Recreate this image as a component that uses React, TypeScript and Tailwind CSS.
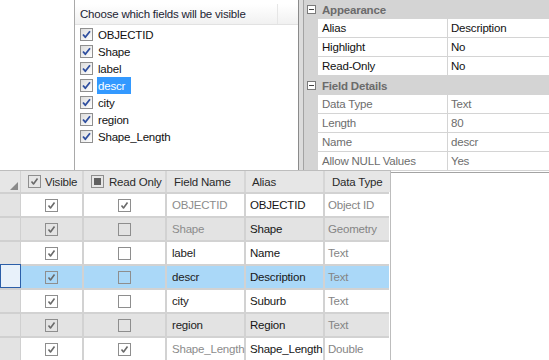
import React from 'react';

type Field = {
  name: string;
  alias: string;
  type: string;
  readOnly: boolean;
  system: boolean;
};

const fields: Field[] = [
  { name: 'OBJECTID', alias: 'OBJECTID', type: 'Object ID', readOnly: true, system: true },
  { name: 'Shape', alias: 'Shape', type: 'Geometry', readOnly: false, system: true },
  { name: 'label', alias: 'Name', type: 'Text', readOnly: false, system: false },
  { name: 'descr', alias: 'Description', type: 'Text', readOnly: false, system: false },
  { name: 'city', alias: 'Suburb', type: 'Text', readOnly: false, system: false },
  { name: 'region', alias: 'Region', type: 'Text', readOnly: false, system: false },
  { name: 'Shape_Length', alias: 'Shape_Length', type: 'Double', readOnly: true, system: true },
];

const selectedIndex = 3;

// grey flat checkbox used by the grid
const GridCheck: React.FC<{ checked: boolean }> = ({ checked }) => (
  <span className="w-[13px] h-[13px] border border-[#8e8e8e] flex items-center justify-center">
    {checked && (
      <svg width="11" height="11" viewBox="0 0 11 11">
        <path d="M2.5 5.5 L4.5 8 L8.5 2.5" fill="none" stroke="#6a6a6a" strokeWidth="1.6" strokeLinejoin="round" />
      </svg>
    )}
  </span>
);

// classic blue-tick checkbox used by the chooser popup
const ListCheck: React.FC = () => (
  <span className="w-[13px] h-[13px] border border-[#8f8f8f] bg-gradient-to-br from-[#dcdcdc] to-white flex items-center justify-center">
    <svg width="11" height="11" viewBox="0 0 11 11">
      <path d="M2 5.5 L4.3 8.2 L9 2.3" fill="none" stroke="#2f4f9f" strokeWidth="1.8" strokeLinejoin="round" />
    </svg>
  </span>
);

const Collapse: React.FC = () => (
  <span className="w-[9px] h-[9px] border border-[#7a7a7a] bg-white flex items-center justify-center">
    <span className="w-[5px] h-px bg-[#444]" />
  </span>
);

const FieldChooser: React.FC = () => (
  <div className="w-[225px] h-full border-l border-r border-l-[#a9a9a9] border-r-[#8a8a8a] bg-white pt-[4px]">
    <div className="h-[21px] flex bg-gradient-to-b from-white to-[#f1f1f1] border-b border-[#e2e2e2]">
      <div className="w-[203px] border-r border-[#e6e6e6] pl-[5px] pt-[2px] flex items-center text-[#1c2433]">
        Choose which fields will be visible
      </div>
    </div>
    <div className="pt-[1px]">
      {fields.map((f, i) => (
        <div key={f.name} className="h-[17px] flex items-center pl-[5px] gap-[4px]">
          <ListCheck />
          <span
            className={
              i === selectedIndex
                ? 'bg-[#3399ff] text-white px-[1px] pt-[2px] h-[17px] flex items-center w-[34px]'
                : 'px-[1px] pt-[2px] text-[#111]'
            }
          >
            {f.name}
          </span>
        </div>
      ))}
    </div>
  </div>
);

const PropRow: React.FC<{ label: string; value: string; muted?: boolean }> = ({ label, value, muted }) => (
  <div className={`h-[19px] flex ${muted ? 'text-[#6d6d6d]' : 'text-[#111]'}`}>
    <div className="w-[14px] bg-[#d4d4d4]" />
    <div className="w-[130px] bg-white border-r border-b border-[#d4d4d4] pl-[4px] pt-[2px] flex items-center">{label}</div>
    <div className="flex-1 bg-white border-b border-[#d4d4d4] pl-[3px] pt-[2px] flex items-center">{value}</div>
  </div>
);

const Category: React.FC<{ title: string }> = ({ title }) => (
  <div className="h-[19px] flex items-center bg-[#d4d4d4] pl-[3px] gap-[6px]">
    <Collapse />
    <span className="font-bold text-[#6b6b6b] pt-[2px]">{title}</span>
  </div>
);

const PropertyGrid: React.FC = () => (
  <div className="flex-1 h-[173px] border-l border-b border-[#a3a3a3] bg-white">
    <Category title="Appearance" />
    <PropRow label="Alias" value="Description" />
    <PropRow label="Highlight" value="No" />
    <PropRow label="Read-Only" value="No" />
    <Category title="Field Details" />
    <PropRow label="Data Type" value="Text" muted />
    <PropRow label="Length" value="80" muted />
    <PropRow label="Name" value="descr" muted />
    <PropRow label="Allow NULL Values" value="Yes" muted />
  </div>
);

const cols = 'grid grid-cols-[21px_63px_83px_79px_79px_64px]';

const FieldGrid: React.FC = () => (
  <div className="relative z-10 w-[391px] border-t border-r border-[#bdbdbd] bg-white">
    <div className={`${cols} h-[21px] bg-[#e6e6e6] text-[#2a2a2a]`}>
      <div className="border-r border-[#d2d2d2] flex items-end justify-end pr-[2px] pb-[2px]">
        <svg width="8" height="8" viewBox="0 0 8 8">
          <polygon points="8,0 8,8 0,8" fill="#8a8a8a" />
        </svg>
      </div>
      <div className="border-r-2 border-[#d6d6d6] flex items-center pl-[7px] gap-[4px]">
        <GridCheck checked />
        <span className="pt-[2px]">Visible</span>
      </div>
      <div className="border-r-2 border-[#d6d6d6] flex items-center pl-[7px] gap-[5px]">
        <span className="w-[13px] h-[13px] border border-[#8e8e8e] flex items-center justify-center">
          <span className="w-[7px] h-[7px] bg-[#606060]" />
        </span>
        <span className="pt-[2px]">Read Only</span>
      </div>
      <div className="border-r-2 border-[#d6d6d6] flex items-center pl-[7px] pt-[2px]">Field Name</div>
      <div className="border-r-2 border-[#d6d6d6] flex items-center pl-[6px] pt-[2px]">Alias</div>
      <div className="flex items-center pl-[7px] pt-[2px]">Data Type</div>
    </div>
    {fields.map((f, i) => {
      const selected = i === selectedIndex;
      const rowBg = selected ? 'bg-[#aad8f8]' : i % 2 === 1 ? 'bg-[#e3e3e3]' : 'bg-white';
      return (
        <div key={f.name} className={`${cols} h-[24px]`}>
          <div
            className={
              selected
                ? 'border border-[#2b5ea8] bg-[#e8f1fa]'
                : 'bg-[#e3e3e3] border-r border-t-2 border-[#d0d0d0]'
            }
          />
          <div className={`${rowBg} border-r-2 border-t-2 border-[#d2d2d2] flex items-center justify-center`}>
            <GridCheck checked />
          </div>
          <div className={`${rowBg} border-r-2 border-t-2 border-[#d2d2d2] flex items-center justify-center`}>
            <GridCheck checked={f.readOnly} />
          </div>
          <div
            className={`${rowBg} border-r-2 border-t-2 border-[#d2d2d2] flex items-center pl-[5px] pt-[2px] whitespace-nowrap ${
              f.system ? 'text-[#8c8c8c]' : 'text-[#222]'
            }`}
          >
            {f.name}
          </div>
          <div className={`${rowBg} border-r-2 border-t-2 border-[#d2d2d2] flex items-center pl-[4px] pt-[2px] text-[#161616] whitespace-nowrap`}>
            {f.alias}
          </div>
          <div className={`${rowBg} border-t-2 border-[#d2d2d2] flex items-center pl-[3px] pt-[2px] text-[#858585]`}>
            {f.type}
          </div>
        </div>
      );
    })}
  </div>
);

export default function App() {
  return (
    <div className="w-[549px] h-[360px] bg-white overflow-hidden text-[11.5px] leading-none tracking-[-0.2px] font-['Liberation_Sans',Arial,sans-serif]">
      <div className="h-[170px] flex">
        <div className="w-[74px]" />
        <FieldChooser />
        <div className="w-[4px] bg-[#dcdcdc]" />
        <PropertyGrid />
      </div>
      <FieldGrid />
    </div>
  );
}
